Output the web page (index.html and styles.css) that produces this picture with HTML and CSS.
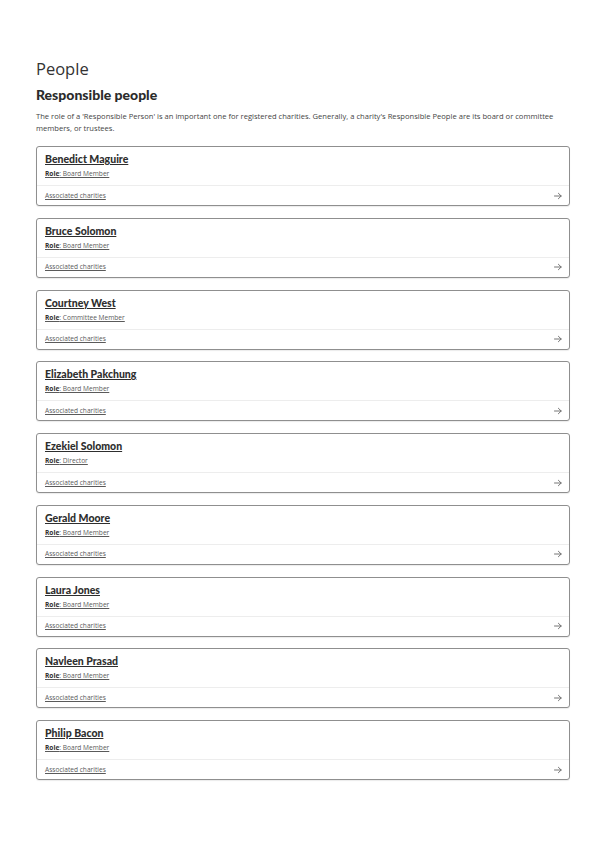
FILE: index.html
```html
<!DOCTYPE html>
<html lang="en">
<head>
<meta charset="utf-8">
<title>People</title>
<link rel="stylesheet" href="styles.css">
</head>
<body>
<main class="page">
  <h1 class="title">People</h1>
  <h2 class="subtitle">Responsible people</h2>
  <p class="intro">The role of a 'Responsible Person' is an important one for registered charities. Generally, a charity's Responsible People are its board or committee members, or trustees.</p>
  <ul class="people">
    <li class="card">
      <div class="card-top">
        <a class="name" href="#">Benedict Maguire</a>
        <div class="role"><b>Role</b>: Board Member</div>
      </div>
      <a class="card-bottom" href="#"><span class="assoc">Associated charities</span><svg class="arrow" viewBox="0 0 8 8" width="8" height="8"><path d="M0.5 4H7.2M4.4 1.3L7.2 4L4.4 6.7"/></svg></a>
    </li>
    <li class="card">
      <div class="card-top">
        <a class="name" href="#">Bruce Solomon</a>
        <div class="role"><b>Role</b>: Board Member</div>
      </div>
      <a class="card-bottom" href="#"><span class="assoc">Associated charities</span><svg class="arrow" viewBox="0 0 8 8" width="8" height="8"><path d="M0.5 4H7.2M4.4 1.3L7.2 4L4.4 6.7"/></svg></a>
    </li>
    <li class="card">
      <div class="card-top">
        <a class="name" href="#">Courtney West</a>
        <div class="role"><b>Role</b>: Committee Member</div>
      </div>
      <a class="card-bottom" href="#"><span class="assoc">Associated charities</span><svg class="arrow" viewBox="0 0 8 8" width="8" height="8"><path d="M0.5 4H7.2M4.4 1.3L7.2 4L4.4 6.7"/></svg></a>
    </li>
    <li class="card">
      <div class="card-top">
        <a class="name" href="#">Elizabeth Pakchung</a>
        <div class="role"><b>Role</b>: Board Member</div>
      </div>
      <a class="card-bottom" href="#"><span class="assoc">Associated charities</span><svg class="arrow" viewBox="0 0 8 8" width="8" height="8"><path d="M0.5 4H7.2M4.4 1.3L7.2 4L4.4 6.7"/></svg></a>
    </li>
    <li class="card">
      <div class="card-top">
        <a class="name" href="#">Ezekiel Solomon</a>
        <div class="role"><b>Role</b>: Director</div>
      </div>
      <a class="card-bottom" href="#"><span class="assoc">Associated charities</span><svg class="arrow" viewBox="0 0 8 8" width="8" height="8"><path d="M0.5 4H7.2M4.4 1.3L7.2 4L4.4 6.7"/></svg></a>
    </li>
    <li class="card">
      <div class="card-top">
        <a class="name" href="#">Gerald Moore</a>
        <div class="role"><b>Role</b>: Board Member</div>
      </div>
      <a class="card-bottom" href="#"><span class="assoc">Associated charities</span><svg class="arrow" viewBox="0 0 8 8" width="8" height="8"><path d="M0.5 4H7.2M4.4 1.3L7.2 4L4.4 6.7"/></svg></a>
    </li>
    <li class="card">
      <div class="card-top">
        <a class="name" href="#">Laura Jones</a>
        <div class="role"><b>Role</b>: Board Member</div>
      </div>
      <a class="card-bottom" href="#"><span class="assoc">Associated charities</span><svg class="arrow" viewBox="0 0 8 8" width="8" height="8"><path d="M0.5 4H7.2M4.4 1.3L7.2 4L4.4 6.7"/></svg></a>
    </li>
    <li class="card">
      <div class="card-top">
        <a class="name" href="#">Navleen Prasad</a>
        <div class="role"><b>Role</b>: Board Member</div>
      </div>
      <a class="card-bottom" href="#"><span class="assoc">Associated charities</span><svg class="arrow" viewBox="0 0 8 8" width="8" height="8"><path d="M0.5 4H7.2M4.4 1.3L7.2 4L4.4 6.7"/></svg></a>
    </li>
    <li class="card">
      <div class="card-top">
        <a class="name" href="#">Philip Bacon</a>
        <div class="role"><b>Role</b>: Board Member</div>
      </div>
      <a class="card-bottom" href="#"><span class="assoc">Associated charities</span><svg class="arrow" viewBox="0 0 8 8" width="8" height="8"><path d="M0.5 4H7.2M4.4 1.3L7.2 4L4.4 6.7"/></svg></a>
    </li>
  </ul>
</main>
</body>
</html>
```
FILE: styles.css
```css
html, body {
  margin: 0;
  padding: 0;
  background: #ffffff;
}
body {
  font-family: "Open Sans", "Liberation Sans", sans-serif;
  color: #3a3a3a;
}
.page {
  padding: 58px 29px 40px 36px;
}
.title {
  margin: 0;
  font-size: 16.5px;
  line-height: 22px;
  font-weight: 400;
  color: #333;
}
.subtitle {
  margin: 6px 0 0;
  font-family: "Lato", "Open Sans", sans-serif;
  font-size: 14px;
  line-height: 18px;
  font-weight: 900;
  color: #2b2b2b;
}
.intro {
  margin: 6px 0 0;
  font-size: 7.6px;
  line-height: 12px;
  color: #444;
  max-width: 525px;
}
.people {
  list-style: none;
  margin: 12px 0 0;
  padding: 0;
  display: flex;
  flex-direction: column;
  gap: 11.75px;
}
.card {
  border: 1px solid #8f8f8f;
  border-radius: 3px;
  background: #fff;
  box-shadow: 0 1px 1px rgba(0, 0, 0, 0.08);
}
.card-top {
  padding: 6px 8px 5px;
  display: flex;
  flex-direction: column;
  align-items: flex-start;
}
.name {
  font-family: "Lato", "Open Sans", sans-serif;
  font-size: 10.5px;
  line-height: 13px;
  font-weight: 900;
  color: #2e2e2e;
  text-decoration: underline;
  text-underline-offset: 1px;
}
.role {
  margin-top: 2px;
  font-size: 6.6px;
  line-height: 12px;
  color: #5a5a5a;
  text-decoration: underline;
  text-underline-offset: 1px;
}
.role b {
  font-weight: 700;
  color: #333;
}
.card-bottom {
  display: flex;
  align-items: center;
  justify-content: space-between;
  height: 19px;
  padding: 0 7px 0 8px;
  border-top: 1px solid #ededed;
  text-decoration: none;
  color: #5a5a5a;
}
.assoc {
  font-size: 6.6px;
  line-height: 12px;
  text-decoration: underline;
  text-underline-offset: 1px;
}
.arrow {
  fill: none;
  stroke: #666;
  stroke-width: 0.9;
  stroke-linecap: round;
  stroke-linejoin: round;
}
```
